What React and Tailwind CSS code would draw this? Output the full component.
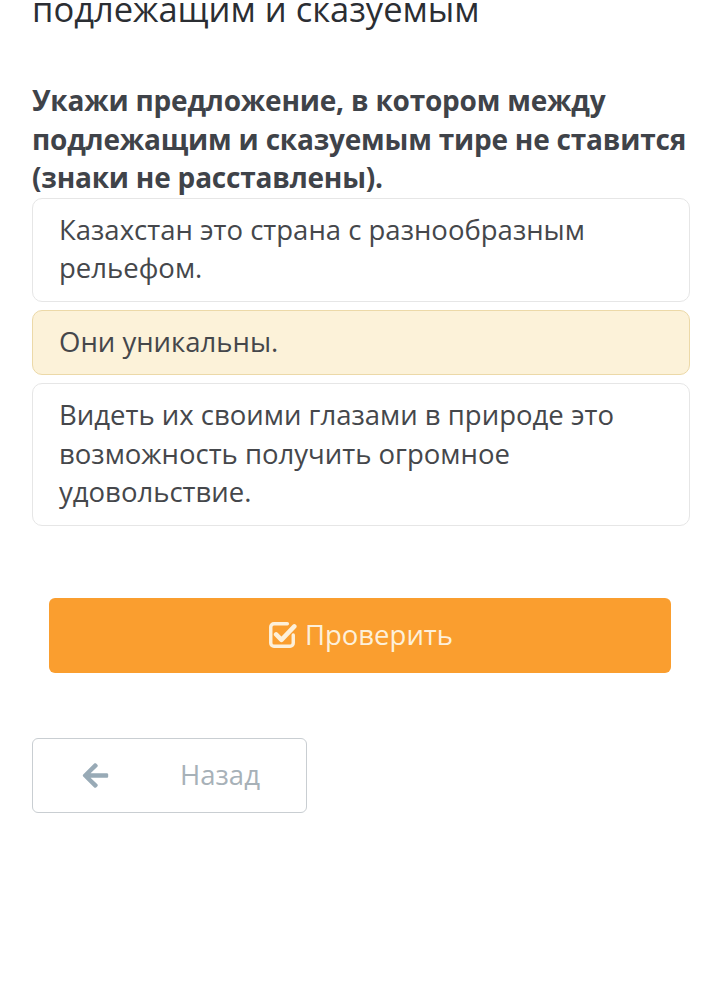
import React from "react";
import { FaArrowLeft } from "react-icons/fa";

const options = [
  { text: "Казахстан это страна с разнообразным рельефом.", selected: false },
  { text: "Они уникальны.", selected: true },
  { text: "Видеть их своими глазами в природе это возможность получить огромное удовольствие.", selected: false },
];

const CheckSquare = () => (
  <svg viewBox="0 0 28 28" className="w-[30px] h-[30px]" fill="none">
    <path d="M19 3.5H6.5a3 3 0 0 0-3 3v15a3 3 0 0 0 3 3h15a3 3 0 0 0 3-3v-7.5" stroke="#fdf0da" strokeWidth="3.2" strokeLinecap="round" />
    <path d="M8.5 13.5l5 5L25.5 6" stroke="#fdf0da" strokeWidth="4.2" strokeLinecap="round" strokeLinejoin="round" />
  </svg>
);

const App = () => {
  return (
    <div className="min-h-screen bg-white font-['Open_Sans',sans-serif] overflow-hidden" style={{ height: 1004 }}>
      <div className="px-[32px]">
        <h1 className="text-[34.5px] leading-[44px] text-[#2b2e33] -mt-[13px]">подлежащим и сказуемым</h1>

        <p className="mt-[50px] font-bold text-[28px] leading-[38.5px] text-[#3f4349] tracking-[-0.2px]">
          Укажи предложение, в котором между подлежащим и сказуемым тире не ставится (знаки не расставлены).
        </p>

        <div className="mt-[1px] flex flex-col gap-[8px] w-[658px]">
          {options.map((o) => (
            <div
              key={o.text}
              className={
                o.selected
                  ? "rounded-[10px] border border-[#ecd9a8] bg-[#fcf2d9] px-[26px] pt-[12px] pb-[13px]"
                  : "rounded-[10px] border border-[#e6e6e6] bg-white px-[26px] pt-[12px] pb-[13px]"
              }
            >
              <p className="text-[27.5px] leading-[38.5px] text-[#45474b]">{o.text}</p>
            </div>
          ))}
        </div>

        <div className="mt-[72px] px-[17px]">
          <button className="w-full h-[75px] rounded-[6px] bg-[#fa9e2f] flex items-center justify-center gap-[8px] text-[#fdf0da] text-[27.5px]">
            <CheckSquare />
            <span>Проверить</span>
          </button>
        </div>

        <button className="mt-[65px] w-[275px] h-[75px] rounded-[6px] border border-[#c9ced2] bg-white flex items-center text-[#a7b1b8] text-[27.5px]">
          <FaArrowLeft className="ml-[48px] w-[29px] h-[29px] text-[#98aab6]" />
          <span className="ml-[70px]">Назад</span>
        </button>
      </div>
    </div>
  );
};

export default App;
